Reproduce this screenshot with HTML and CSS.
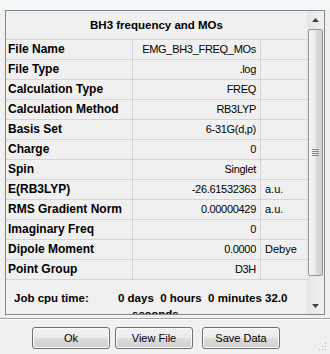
FILE: index.html
```html
<!DOCTYPE html>
<html>
<head>
<meta charset="utf-8">
<link rel="stylesheet" href="styles.css">
</head>
<body>
<div class="top"></div>
<div class="panel">
  <div class="content">
    <div class="title">BH3 frequency and MOs</div>
    <div class="row"><div class="lbl">File Name</div><div class="val">EMG_BH3_FREQ_MOs</div><div class="unit"></div></div>
    <div class="row"><div class="lbl">File Type</div><div class="val">.log</div><div class="unit"></div></div>
    <div class="row"><div class="lbl">Calculation Type</div><div class="val">FREQ</div><div class="unit"></div></div>
    <div class="row"><div class="lbl">Calculation Method</div><div class="val">RB3LYP</div><div class="unit"></div></div>
    <div class="row"><div class="lbl">Basis Set</div><div class="val">6-31G(d,p)</div><div class="unit"></div></div>
    <div class="row"><div class="lbl">Charge</div><div class="val">0</div><div class="unit"></div></div>
    <div class="row"><div class="lbl">Spin</div><div class="val">Singlet</div><div class="unit"></div></div>
    <div class="row"><div class="lbl">E(RB3LYP)</div><div class="val">-26.61532363</div><div class="unit">a.u.</div></div>
    <div class="row"><div class="lbl">RMS Gradient Norm</div><div class="val">0.00000429</div><div class="unit">a.u.</div></div>
    <div class="row"><div class="lbl">Imaginary Freq</div><div class="val">0</div><div class="unit"></div></div>
    <div class="row"><div class="lbl">Dipole Moment</div><div class="val">0.0000</div><div class="unit">Debye</div></div>
    <div class="row"><div class="lbl">Point Group</div><div class="val">D3H</div><div class="unit"></div></div>
    <div class="job">
      <div class="job-lbl">Job cpu time:</div>
      <div class="job-val">0 days&nbsp; 0 hours&nbsp; 0 minutes 32.0<br><span class="sec">seconds</span></div>
    </div>
  </div>
  <div class="scrollbar">
    <div class="sb-btn"><svg width="7" height="4" viewBox="0 0 7 4"><path d="M3.5 0 L7 4 L0 4 Z" fill="#404040"/></svg></div>
    <div class="thumb"><svg width="7" height="7" viewBox="0 0 7 7"><path d="M0 0.5H7M0 2.5H7M0 4.5H7M0 6.5H7" stroke="#8a8a8a" stroke-width="1"/></svg></div>
    <div class="track"></div>
    <div class="sb-btn"><svg width="7" height="4" viewBox="0 0 7 4"><path d="M0 0 L7 0 L3.5 4 Z" fill="#404040"/></svg></div>
  </div>
</div>
<div class="sep"></div>
<div class="buttons">
  <div class="btn">Ok</div>
  <div class="btn b2">View File</div>
  <div class="btn b3">Save Data</div>
</div>
<svg class="grip" width="10" height="10" viewBox="0 0 10 10">
  <rect x="8" y="2" width="1" height="1" fill="#b0b0b0"/>
  <rect x="5" y="5" width="1" height="1" fill="#b0b0b0"/><rect x="8" y="5" width="1" height="1" fill="#b0b0b0"/>
  <rect x="2" y="8" width="1" height="1" fill="#b0b0b0"/><rect x="5" y="8" width="1" height="1" fill="#b0b0b0"/><rect x="8" y="8" width="1" height="1" fill="#b0b0b0"/>
</svg>
</body>
</html>
```

FILE: styles.css
```css
html, body {
  margin: 0;
  padding: 0;
}
body {
  width: 330px;
  height: 354px;
  overflow: hidden;
  background: #f0f0f0;
  font-family: "Liberation Sans", Arial, sans-serif;
  color: #000;
  position: relative;
}
.top {
  height: 10px;
  background: #f4f7f7;
}
.panel {
  margin: 0 5px;
  height: 305px;
  box-sizing: border-box;
  border: 1px solid #828790;
  display: flex;
  background: #f0f0f0;
}
.content {
  flex: 1;
  overflow: hidden;
  min-width: 0;
}
.title {
  height: 28px;
  border-bottom: 1px solid #d4d4d4;
  display: flex;
  align-items: center;
  justify-content: center;
  font-weight: bold;
  font-size: 11.5px;
}
.row {
  display: grid;
  grid-template-columns: 127px 128px 1fr;
  height: 20px;
  box-sizing: border-box;
  border-bottom: 1px solid #d4d4d4;
  font-size: 11px;
  line-height: 19px;
}
.lbl {
  font-weight: bold;
  font-size: 12px;
  padding-left: 2px;
  border-right: 1px solid #d4d4d4;
  white-space: nowrap;
}
.val {
  text-align: right;
  padding-right: 4px;
  border-right: 1px solid #d4d4d4;
  letter-spacing: -0.3px;
  white-space: nowrap;
}
.unit {
  padding-left: 4px;
  white-space: nowrap;
}
.job {
  display: flex;
  padding-top: 10px;
  padding-left: 8px;
  font-weight: bold;
  font-size: 11.5px;
  line-height: 16px;
}
.job-lbl {
  width: 104px;
  flex: none;
}
.job-val {
  white-space: nowrap;
}
.sec {
  padding-left: 14px;
}
.scrollbar {
  width: 17px;
  flex: none;
  display: flex;
  flex-direction: column;
  background: linear-gradient(to right, #e4e4e4, #f2f2f2);
}
.sb-btn {
  height: 17px;
  display: flex;
  align-items: center;
  justify-content: center;
  flex: none;
}
.thumb {
  margin: 1px 1px 0 1px;
  height: 247px;
  box-sizing: border-box;
  border: 1px solid #979797;
  border-radius: 2px;
  background: linear-gradient(to right, #f4f4f4 0%, #ececec 45%, #dcdcdc 55%, #d0d0d0 100%);
  display: flex;
  align-items: center;
  justify-content: center;
  flex: none;
}
.track {
  flex: 1;
}
.sep {
  margin-top: 3px;
  height: 1px;
  background: #a0a0a0;
  border-bottom: 1px solid #ffffff;
}
.buttons {
  display: flex;
  padding-left: 32px;
  margin-top: 7px;
}
.btn {
  width: 78px;
  height: 22px;
  box-sizing: border-box;
  border: 1px solid #707070;
  border-radius: 3px;
  background: linear-gradient(#f2f2f2 0%, #ebebeb 50%, #dddddd 50%, #cfcfcf 100%);
  box-shadow: inset 0 0 0 1px #fbfbfb;
  font-size: 11px;
  display: flex;
  align-items: center;
  justify-content: center;
}
.b2 {
  margin-left: 5px;
}
.b3 {
  margin-left: 9px;
}
.grip {
  position: absolute;
  right: 3px;
  bottom: 3px;
}
```
